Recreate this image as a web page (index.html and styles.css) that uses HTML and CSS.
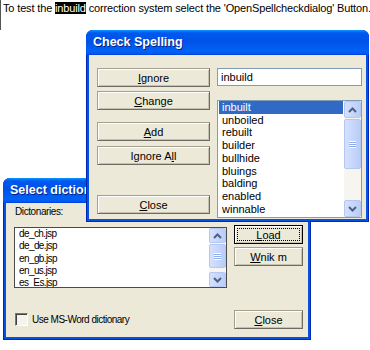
FILE: index.html
```html
<!DOCTYPE html>
<html>
<head>
<meta charset="utf-8">
<link rel="stylesheet" href="styles.css">
</head>
<body>
<p class="intro">To test the <span class="hl">inbuild</span> correction system select the 'OpenSpellcheckdialog' Button.</p>

<div class="win dict">
  <div class="titlebar">Select dictionary</div>
  <div class="body">
    <div class="label">Dictonaries:</div>
    <div class="dict-row">
      <div class="listbox dict-list">
        <div class="items">
          <div class="item">de_ch.jsp</div>
          <div class="item">de_de.jsp</div>
          <div class="item">en_gb.jsp</div>
          <div class="item">en_us.jsp</div>
          <div class="item">es_Es.jsp</div>
        </div>
        <div class="sbar">
          <div class="sbtn"><svg width="9" height="6" viewBox="0 0 9 6"><path d="M1 5L4.5 1.5L8 5" stroke="#4D6185" stroke-width="2" fill="none"/></svg></div>
          <div class="thumb"><svg width="7" height="8" viewBox="0 0 7 8"><path d="M0 1.5h7M0 3.5h7M0 5.5h7M0 7.5h7" stroke="#fff"/><path d="M0 2.5h7M0 4.5h7M0 6.5h7" stroke="#8FAEF0"/></svg></div>
          <div class="track"></div>
          <div class="sbtn"><svg width="9" height="6" viewBox="0 0 9 6"><path d="M1 1L4.5 4.5L8 1" stroke="#4D6185" stroke-width="2" fill="none"/></svg></div>
        </div>
      </div>
      <div class="btncol">
        <button class="btn focus"><span class="focusring"><u>L</u>oad</span></button>
        <button class="btn"><u>W</u>nik m</button>
      </div>
    </div>
    <div class="bottom-row">
      <div class="check"><span class="box"></span><span class="check-label">Use MS-Word dictionary</span></div>
      <button class="btn close-dict"><u>C</u>lose</button>
    </div>
  </div>
</div>

<div class="win spell">
  <div class="titlebar">Check Spelling</div>
  <div class="body">
    <div class="col-btns">
      <button class="btn"><u>I</u>gnore</button>
      <button class="btn gap-s"><u>C</u>hange</button>
      <button class="btn gap-l"><u>A</u>dd</button>
      <button class="btn gap-m">Ignore A<u>l</u>l</button>
      <button class="btn push"><u>C</u>lose</button>
    </div>
    <div class="col-right">
      <div class="input">inbuild</div>
      <div class="listbox spell-list">
        <div class="items">
          <div class="item sel">inbuilt</div>
          <div class="item">unboiled</div>
          <div class="item">rebuilt</div>
          <div class="item">builder</div>
          <div class="item">bullhide</div>
          <div class="item">bluings</div>
          <div class="item">balding</div>
          <div class="item">enabled</div>
          <div class="item">winnable</div>
        </div>
        <div class="sbar">
          <div class="sbtn"><svg width="9" height="6" viewBox="0 0 9 6"><path d="M1 5L4.5 1.5L8 5" stroke="#4D6185" stroke-width="2" fill="none"/></svg></div>
          <div class="thumb"><svg width="7" height="8" viewBox="0 0 7 8"><path d="M0 1.5h7M0 3.5h7M0 5.5h7M0 7.5h7" stroke="#fff"/><path d="M0 2.5h7M0 4.5h7M0 6.5h7" stroke="#8FAEF0"/></svg></div>
          <div class="track"></div>
          <div class="sbtn"><svg width="9" height="6" viewBox="0 0 9 6"><path d="M1 1L4.5 4.5L8 1" stroke="#4D6185" stroke-width="2" fill="none"/></svg></div>
        </div>
      </div>
    </div>
  </div>
</div>
</body>
</html>
```

FILE: styles.css
```css
* { box-sizing: border-box; }

body {
  margin: 0;
  width: 370px;
  height: 350px;
  position: relative;
  overflow: hidden;
  background: #fff;
  color: #000;
  font-family: "Liberation Sans", Arial, sans-serif;
  font-size: 11px;
}

.intro {
  margin: 0;
  padding: 2px 0 15px 2px;
  line-height: 13px;
  white-space: nowrap;
  letter-spacing: -0.15px;
  border-left: 1px solid #555;
}

.hl { background: #000; color: #fff; }

/* windows on the desktop */
.win {
  position: absolute;
  display: flex;
  flex-direction: column;
  background: #0452E2;
  border-radius: 7px 7px 0 0;
  box-shadow: inset 0 0 0 1px #0029B0;
}

.spell { left: 86px; top: 30px; width: 283px; height: 192px; z-index: 2; }
.dict  { left: 3px; top: 178px; width: 308px; height: 162px; z-index: 1; }

.titlebar {
  flex: none;
  height: 25px;
  border-radius: 7px 7px 0 0;
  background: linear-gradient(#0A97FF 0%, #0058EE 12%, #0052E8 45%, #0062F8 85%, #0058F0 94%, #003DD7 100%);
  color: #fff;
  font-weight: bold;
  font-size: 12.5px;
  line-height: 25px;
  padding-left: 7px;
  text-shadow: 1px 1px 0 #0A1E7E;
  white-space: nowrap;
  overflow: hidden;
}

.body {
  flex: 1;
  margin: 0 3px 3px;
  background: #ECE9D8;
}

/* buttons */
.btn {
  height: 19px;
  width: 100%;
  flex: none;
  padding: 0;
  font: inherit;
  font-size: 11px;
  color: #000;
  background: #ECE9D8;
  border: 1px solid #A3A090;
  border-right-color: #6E6C62;
  border-bottom-color: #6E6C62;
  box-shadow: inset 1px 1px #fff, inset -1px -1px #C5C2B2;
  display: flex;
  align-items: center;
  justify-content: center;
}

.btn.focus {
  border-color: #000;
  padding: 2px;
}

.focusring {
  flex: 1;
  align-self: stretch;
  border: 1px dotted #000;
  display: flex;
  align-items: center;
  justify-content: center;
}

/* Check Spelling */
.spell .body {
  display: grid;
  grid-template-columns: 113px 145px;
  column-gap: 7px;
  padding: 13px 0 1px 8px;
}

.col-btns {
  display: flex;
  flex-direction: column;
  padding-bottom: 4px;
}

.gap-s { margin-top: 4px; }
.gap-l { margin-top: 12px; }
.gap-m { margin-top: 5px; }
.push  { margin-top: auto; }

.col-right {
  display: flex;
  flex-direction: column;
}

.input {
  height: 18px;
  flex: none;
  background: #fff;
  border: 1px solid #7F9DB9;
  padding: 0 3px;
  line-height: 16px;
}

.listbox {
  display: flex;
  background: #fff;
  border: 1px solid #7F9DB9;
}

.spell-list { margin-top: 14px; flex: 1; }

.items { flex: 1; padding: 0 1px; overflow: hidden; }

.item {
  line-height: 12.7px;
  padding-left: 3px;
  white-space: nowrap;
}

.item.sel { background: #316AC5; color: #fff; }

/* scrollbar */
.sbar {
  width: 17px;
  flex: none;
  display: flex;
  flex-direction: column;
  background: #F6F5F0;
}

.sbtn, .thumb {
  flex: none;
  display: flex;
  align-items: center;
  justify-content: center;
  border: 1px solid #B4C7F3;
  border-radius: 2px;
  background: linear-gradient(to right, #D5E0FD, #BACDF8);
}

.sbtn { height: 17px; }
.thumb { height: 50px; margin-top: 1px; }
.track { flex: 1; }

/* Select dictionary */
.dict .body {
  display: flex;
  flex-direction: column;
  padding: 2px 5px 8px 8px;
}

.label {
  line-height: 13px;
  font-size: 10px;
  letter-spacing: -0.4px;
  padding-left: 1px;
}

.dict-row {
  display: flex;
  gap: 7px;
  margin-top: 7px;
}

.dict-list {
  width: 213px;
  height: 61px;
  margin-top: 2px;
  border-color: #4A4A4A;
}

.dict-list .item {
  line-height: 12.3px;
  font-size: 10px;
  letter-spacing: -0.6px;
}

.dict-list .sbtn { height: 15px; }
.dict-list .thumb { height: 24px; }

.btncol {
  width: 69px;
  display: flex;
  flex-direction: column;
  gap: 3px;
}

.bottom-row {
  margin-top: auto;
  display: flex;
  align-items: center;
  justify-content: space-between;
}

.close-dict { width: 69px; }

.check {
  display: flex;
  align-items: center;
  gap: 4px;
  padding-left: 1px;
}

.box {
  width: 13px;
  height: 13px;
  background: #F4F3EE;
  border: 1px solid;
  border-color: #7A7868 #fff #fff #7A7868;
  box-shadow: inset 1px 1px #404040;
}

.check-label {
  font-size: 10px;
  letter-spacing: -0.5px;
}
```
